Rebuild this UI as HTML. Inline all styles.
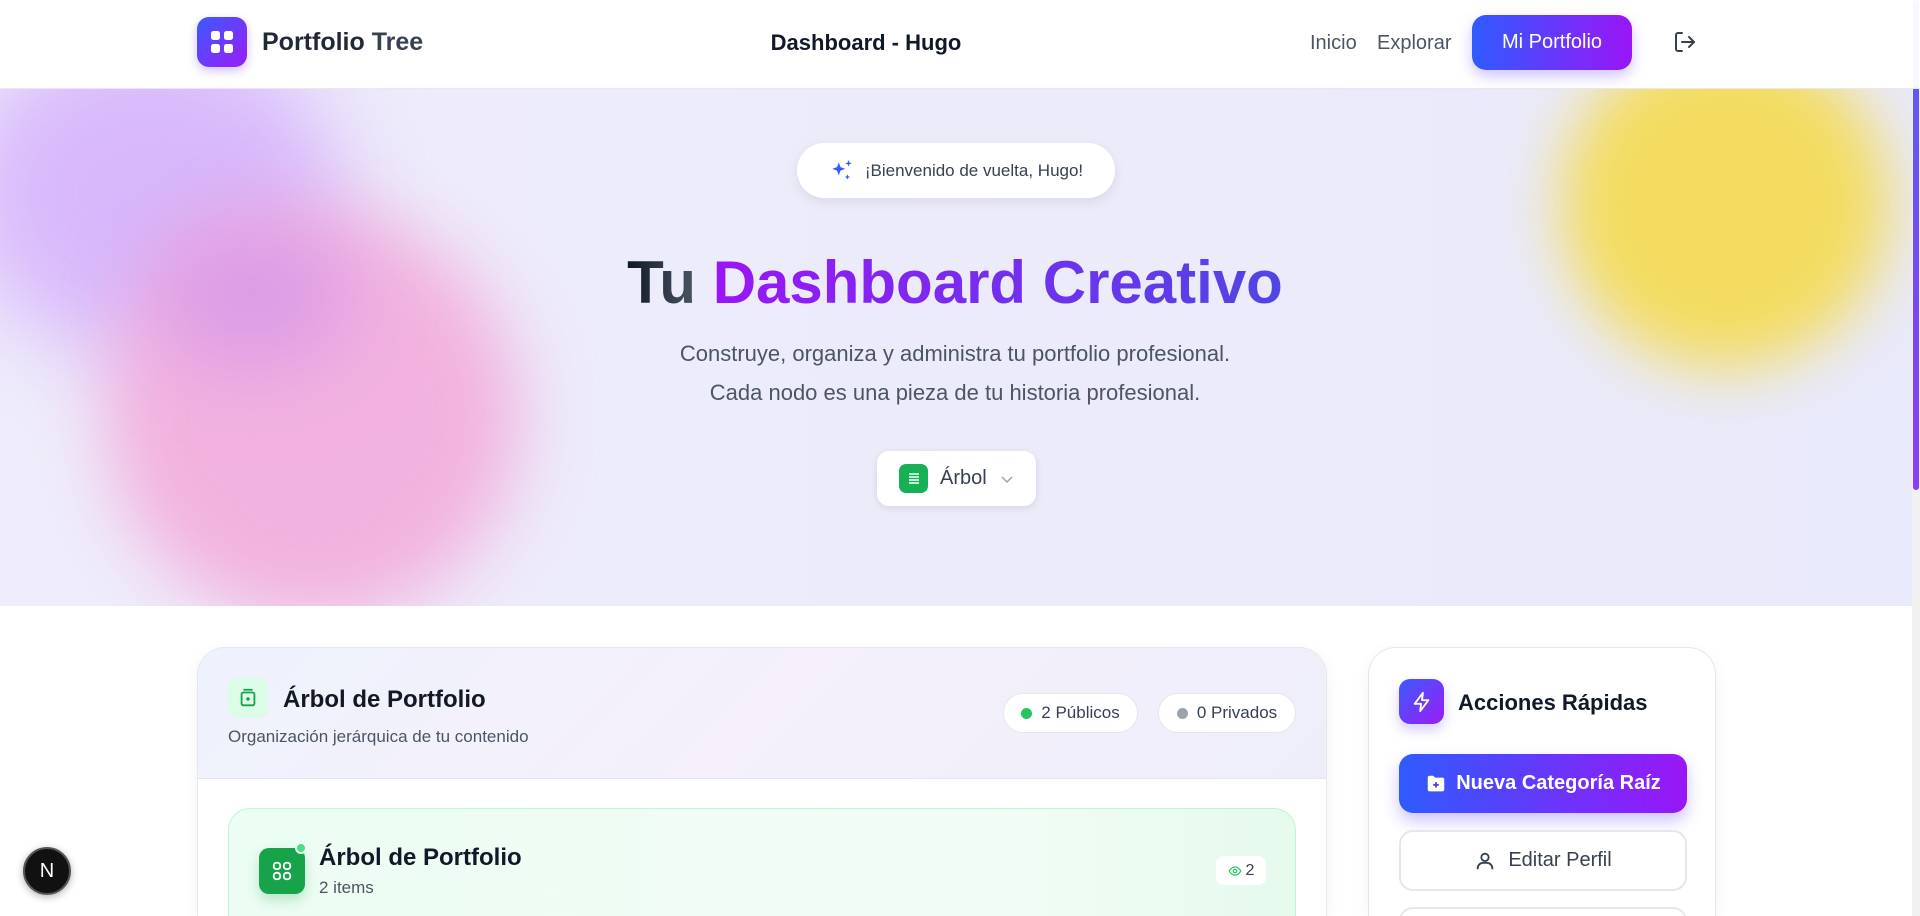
<!DOCTYPE html>
<html style="height:916px;overflow:hidden"><head><meta charset="utf-8"><style>
*{box-sizing:border-box;margin:0;padding:0}
body{width:1920px;height:916px;overflow:hidden;background:#fff;font-family:"Liberation Sans",sans-serif;color:#111827}
#wrap{position:relative;width:1920px;height:916px;overflow:hidden}
.nav{position:absolute;left:0;top:0;width:1920px;height:89px;background:rgba(255,255,255,.96);border-bottom:1px solid #e8e8ee;z-index:5}
.hero{position:absolute;left:0;top:89px;width:1920px;height:517px;background:linear-gradient(90deg,#efedfb,#ecebfa 50%,#e9eafb);overflow:hidden}
.blob{position:absolute;border-radius:50%;filter:blur(30px)}
.ab{position:absolute}
.pill{position:absolute;background:#fff;border:1px solid #e5e7eb;border-radius:30px;display:flex;align-items:center;justify-content:center}
</style></head><body><div id="wrap">
<div class="nav">
  <div class="ab" style="left:197px;top:17px;width:50px;height:50px;border-radius:12px;background:linear-gradient(135deg,#3b5bff,#9b1cf5);box-shadow:0 4px 10px rgba(100,60,240,.3)">
    <svg width="50" height="50" viewBox="0 0 50 50"><g fill="#fff"><rect x="14" y="14" width="9" height="9" rx="2.5"/><rect x="27" y="14" width="9" height="9" rx="2.5"/><rect x="14" y="27" width="9" height="9" rx="2.5"/><rect x="27" y="27" width="9" height="9" rx="2.5"/></g></svg>
  </div>
  <div class="ab" style="left:262px;top:28px;font-size:25px;font-weight:bold;color:#1f2937">Portfolio <span style="color:#374151">Tree</span></div>
  <div class="ab" style="left:766px;top:30px;width:200px;text-align:center;font-size:22px;font-weight:bold;color:#111827">Dashboard - Hugo</div>
  <div class="ab" style="left:1310px;top:32px;font-size:20px;color:#4b5563">Inicio</div>
  <div class="ab" style="left:1377px;top:32px;font-size:20px;color:#4b5563">Explorar</div>
  <div class="ab" style="left:1472px;top:15px;width:160px;height:55px;border-radius:14px;background:linear-gradient(90deg,#2f5bff,#9a16f7);color:#fff;font-size:20px;display:flex;align-items:center;justify-content:center;box-shadow:0 6px 14px rgba(90,60,240,.3)">Mi Portfolio</div>
  <svg class="ab" style="left:1673px;top:30px" width="24" height="24" viewBox="0 0 24 24" fill="none" stroke="#374151" stroke-width="2" stroke-linecap="round" stroke-linejoin="round"><path d="M9 21H5a2 2 0 0 1-2-2V5a2 2 0 0 1 2-2h4"/><path d="M16 17l5-5-5-5"/><path d="M21 12H9"/></svg>
</div>
<div class="hero">
  <div class="blob" style="left:-40px;top:-60px;width:380px;height:330px;background:#d8b8fb;filter:blur(45px)"></div>
  <div class="blob" style="left:105px;top:120px;width:415px;height:415px;background:#f2b2df;filter:blur(35px)"></div>
  <div class="blob" style="left:150px;top:130px;width:200px;height:150px;background:#dc9ce6;filter:blur(40px)"></div>
  <div class="blob" style="left:1560px;top:-50px;width:330px;height:330px;background:#f3dc60;filter:blur(30px)"></div>
  <div class="pill" style="left:797px;top:54px;width:318px;height:55px;border:none;box-shadow:0 4px 12px rgba(0,0,0,.08);font-size:17px;color:#374151">
    <svg width="26" height="26" viewBox="0 0 24 24" fill="#2f5bff" style="margin-right:10px"><path d="M9 4l1.6 4.4L15 10l-4.4 1.6L9 16l-1.6-4.4L3 10l4.4-1.6z"/><path d="M18 2l.8 2.2L21 5l-2.2.8L18 8l-.8-2.2L15 5l2.2-.8z"/><path d="M17 15l.7 1.8 1.8.7-1.8.7L17 20l-.7-1.8-1.8-.7 1.8-.7z"/></svg>¡Bienvenido de vuelta, Hugo!</div>
  <div class="ab" style="left:0;top:158px;width:1910px;text-align:center;font-size:60px;font-weight:bold;line-height:1.2"><span style="background:linear-gradient(90deg,#111827,#4b5563);-webkit-background-clip:text;color:transparent">Tu</span> <span style="background:linear-gradient(90deg,#9a16f7,#4f46e5);-webkit-background-clip:text;color:transparent">Dashboard Creativo</span></div>
  <div class="ab" style="left:0;top:245px;width:1910px;text-align:center;font-size:22px;line-height:39px;color:#4b5563">Construye, organiza y administra tu portfolio profesional.<br>Cada nodo es una pieza de tu historia profesional.</div>
  <div class="ab" style="left:877px;top:362px;width:159px;height:55px;background:#fff;border-radius:12px;box-shadow:0 2px 8px rgba(0,0,0,.1);display:flex;align-items:center;padding-left:22px;font-size:20px;color:#374151">
    <div style="width:29px;height:29px;border-radius:7px;background:#16b055;margin-right:12px;display:flex;align-items:center;justify-content:center"><svg width="16" height="16" viewBox="0 0 16 16" stroke="#fff" stroke-width="1.5"><path d="M3 3h10M3 6h10M3 9h10M3 12h10"/></svg></div>Árbol
    <svg width="16" height="16" viewBox="0 0 16 16" fill="none" stroke="#9ca3af" stroke-width="1.5" style="margin-left:12px"><path d="M3 6l5 5 5-5"/></svg>
  </div>
</div>
<div class="ab" style="left:197px;top:647px;width:1130px;height:269px;border:1px solid #e5e7eb;border-bottom:none;border-radius:28px 28px 0 0;overflow:hidden;background:#fff;box-shadow:0 4px 16px rgba(0,0,0,.05)">
  <div style="height:131px;background:linear-gradient(135deg,#eef2fd,#f5f0fb 50%,#eeeefb);border-bottom:1px solid #e5e7eb;position:relative">
    <div class="ab" style="left:30px;top:30px;width:40px;height:40px;border-radius:9px;background:#dcfce7;display:flex;align-items:center;justify-content:center"><svg width="22" height="22" viewBox="0 0 24 24" fill="none" stroke="#16a34a" stroke-width="2"><rect x="5" y="6" width="14" height="14" rx="2"/><path d="M7 3h10M12 11v4M10 13h4"/></svg></div>
    <div class="ab" style="left:85px;top:38px;font-size:24px;font-weight:bold;color:#111827">Árbol de Portfolio</div>
    <div class="ab" style="left:30px;top:79px;font-size:17px;color:#4b5563">Organización jerárquica de tu contenido</div>
    <div class="pill" style="left:805px;top:45px;width:135px;height:40px;font-size:17px;color:#374151"><span style="width:11px;height:11px;border-radius:50%;background:#22c55e;margin-right:9px"></span>2 Públicos</div>
    <div class="pill" style="left:960px;top:45px;width:138px;height:40px;font-size:17px;color:#374151"><span style="width:11px;height:11px;border-radius:50%;background:#9ca3af;margin-right:9px"></span>0 Privados</div>
  </div>
  <div class="ab" style="left:30px;top:160px;width:1068px;height:200px;border:1px solid #bbf7d0;border-radius:22px;background:linear-gradient(90deg,#ecfdf3,#f2fcf6 70%,#e6faee)">
    <div class="ab" style="left:30px;top:39px;width:46px;height:46px;border-radius:10px;background:#16a34a;box-shadow:0 6px 12px rgba(22,163,74,.25);display:flex;align-items:center;justify-content:center"><svg width="22" height="22" viewBox="0 0 24 24" fill="none" stroke="#fff" stroke-width="2"><rect x="3" y="3" width="7" height="7" rx="3"/><rect x="14" y="3" width="7" height="7" rx="3"/><rect x="3" y="14" width="7" height="7" rx="3"/><rect x="14" y="14" width="7" height="7" rx="3"/></svg></div>
    <div class="ab" style="left:66px;top:33px;width:12px;height:12px;border-radius:50%;background:#4ade80;border:2px solid #ecfdf3"></div>
    <div class="ab" style="left:90px;top:35px;font-size:24px;font-weight:bold;color:#111827">Árbol de Portfolio</div>
    <div class="ab" style="left:90px;top:69px;font-size:17px;color:#4b5563">2 items</div>
    <div class="ab" style="left:987px;top:47px;width:50px;height:29px;background:#fff;border-radius:8px;display:flex;align-items:center;justify-content:center;font-size:16px;color:#374151"><svg width="14" height="14" viewBox="0 0 24 24" fill="none" stroke="#22c55e" stroke-width="2" style="margin-right:4px"><path d="M2 12s4-7 10-7 10 7 10 7-4 7-10 7S2 12 2 12z"/><circle cx="12" cy="12" r="3"/></svg>2</div>
  </div>
</div>
<div class="ab" style="left:1368px;top:647px;width:348px;height:269px;border:1px solid #e5e7eb;border-bottom:none;border-radius:28px 28px 0 0;overflow:hidden;background:#fff;box-shadow:0 4px 16px rgba(0,0,0,.05)">
  <div class="ab" style="left:30px;top:31px;width:45px;height:45px;border-radius:11px;background:linear-gradient(135deg,#3b5bff,#9b1cf5);display:flex;align-items:center;justify-content:center;box-shadow:0 6px 12px rgba(90,60,240,.25)"><svg width="22" height="22" viewBox="0 0 24 24" fill="none" stroke="#fff" stroke-width="2" stroke-linejoin="round"><path d="M13 2L4 14h7l-1 8 9-12h-7z"/></svg></div>
  <div class="ab" style="left:89px;top:42px;font-size:22px;font-weight:bold;color:#111827">Acciones Rápidas</div>
  <div class="ab" style="left:30px;top:106px;width:288px;height:59px;border-radius:14px;background:linear-gradient(90deg,#2f5bff,#9a16f7);color:#fff;font-weight:bold;font-size:20px;display:flex;align-items:center;justify-content:center;box-shadow:0 8px 16px rgba(90,60,240,.3)"><svg width="22" height="22" viewBox="0 0 24 24" fill="#fff" style="margin-right:9px"><path d="M3 5a2 2 0 0 1 2-2h4l2 2h8a2 2 0 0 1 2 2v11a2 2 0 0 1-2 2H5a2 2 0 0 1-2-2z"/><path d="M12 10v6M9 13h6" stroke="#5a3cf0" stroke-width="2"/></svg>Nueva Categoría Raíz</div>
  <div class="ab" style="left:30px;top:182px;width:288px;height:61px;border-radius:14px;border:2px solid #e5e7eb;background:#fff;color:#374151;font-size:20px;display:flex;align-items:center;justify-content:center"><svg width="22" height="22" viewBox="0 0 24 24" fill="none" stroke="#374151" stroke-width="2" style="margin-right:12px"><circle cx="12" cy="8" r="4"/><path d="M4 21v-1a6 6 0 0 1 6-6h4a6 6 0 0 1 6 6v1"/></svg>Editar Perfil</div>
  <div class="ab" style="left:30px;top:259px;width:288px;height:61px;border-radius:14px;border:2px solid #e5e7eb;background:#fff"></div>
</div>
<div class="ab" style="left:23px;top:847px;width:48px;height:48px;border-radius:50%;background:#111;border:2px solid #555;color:#fff;font-size:20px;display:flex;align-items:center;justify-content:center;box-shadow:0 2px 8px rgba(0,0,0,.3)">N</div>
<div class="ab" style="left:1912px;top:0;width:8px;height:916px;background:#f1f1f1"></div>
<div class="ab" style="left:1913px;top:0;width:6px;height:490px;border-radius:3px;background:linear-gradient(#5a5cf5,#8b3cf7)"></div>
</div></body></html>
